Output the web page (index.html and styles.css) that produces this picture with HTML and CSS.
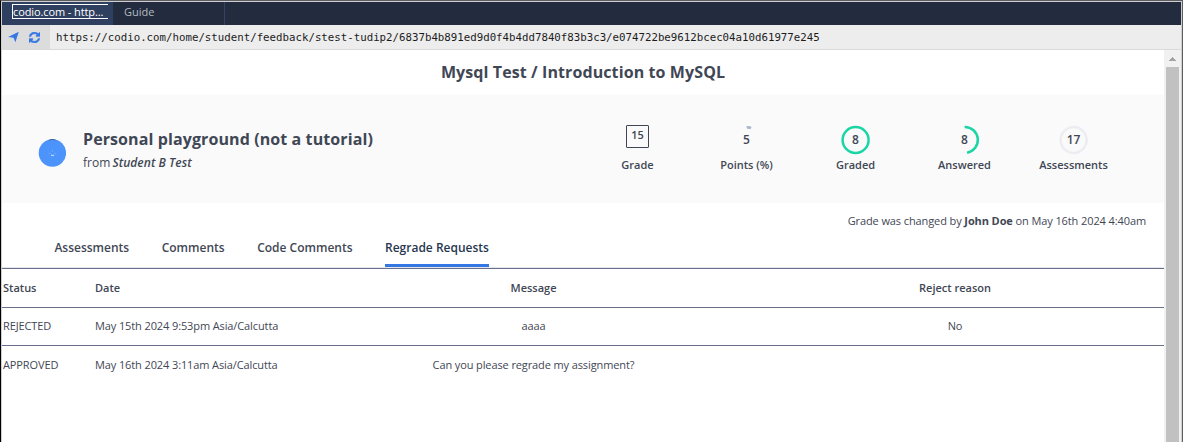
FILE: index.html
```
<!DOCTYPE html>
<html lang="en">
<head>
<meta charset="utf-8">
<title>Mysql Test / Introduction to MySQL</title>
<link rel="stylesheet" href="styles.css">
</head>
<body>
<div class="window">
  <nav class="tabbar">
    <div class="tab tab-active"><span class="tab-label">codio.com - http...</span></div>
    <div class="tab"><span>Guide</span></div>
  </nav>
  <div class="address">
    <div class="address-tools">
      <svg class="icon" width="12" height="12" viewBox="0 0 12 12"><path d="M10.800 .8 7.400 11.200 5.500 6.800.1 5.900Z" fill="#3577e3"/></svg>
      <svg class="icon" width="11" height="11" viewBox="0 0 1536 1536"><path fill="#3577e3" stroke="#3577e3" stroke-width="60" d="M1511 928q0 5-1 7-64 268-268 434.500T764 1536q-146 0-282.500-55T238 1324l-129 129q-19 19-45 19t-45-19-19-45V960q0-26 19-45t45-19h448q26 0 45 19t19 45-19 45l-137 137q71 66 161 102t187 36q134 0 250-65t186-179q11-17 53-117 8-23 30-23h192q13 0 22.500 9.500t9.500 22.500zm25-800v448q0 26-19 45t-45 19h-448q-26 0-45-19t-19-45 19-45l138-138Q969 256 768 256q-134 0-250 65T332 500q-11 17-53 117-8 23-30 23H50q-13 0-22.500-9.500T18 608v-7q65-268 270-434.500T768 0q146 0 284 55.500T1297 212l130-129q19-19 45-19t45 19 19 45z"/></svg>
    </div>
    <div class="url">https://codio.com/home/student/feedback/stest-tudip2/6837b4b891ed9d0f4b4dd7840f83b3c3/e074722be9612bcec04a10d61977e245</div>
  </div>
  <div class="viewport">
    <main class="page">
      <h1 class="title">Mysql Test / Introduction to MySQL</h1>
      <section class="summary">
        <svg class="avatar" width="28" height="28" viewBox="0 0 28 28"><circle cx="14.400" cy="14" r="13.700" fill="#4c94fb"/><path d="M10 1.200Q14.400-.6 18.800 1.200Q14.400 .8 10 1.200" fill="#26496f"/><path d="M10.500 14.500h2M16.500 14.500h2M14.500 11v2" stroke="#79b0fc" stroke-width=".7"/><path d="M13 16.300h3" stroke="#d6e7ff" stroke-width="1"/></svg>
        <div class="project">
          <h2 class="project-name">Personal playground (not a tutorial)</h2>
          <p class="from"><span>from</span> <em class="student">Student B Test</em></p>
        </div>
        <div class="stats">
          <div class="stat"><div class="dial"><span class="grade">15</span></div><span class="stat-label">Grade</span></div>
          <div class="stat"><div class="dial"><svg class="ring" width="30" height="30" viewBox="0 0 30 30"><path d="M14.700 2.600Q17 2 19 3.200" fill="none" stroke="#adb5cd" stroke-width="2.600"/></svg><span class="value">5</span></div><span class="stat-label">Points (%)</span></div>
          <div class="stat"><div class="dial"><svg class="ring" width="30" height="30" viewBox="0 0 30 30"><circle cx="14.600" cy="15" r="13" fill="none" stroke="#1bd6a4" stroke-width="2.500"/></svg><span class="value">8</span></div><span class="stat-label">Graded</span></div>
          <div class="stat"><div class="dial"><svg class="ring" width="30" height="30" viewBox="0 0 30 30"><path d="M14.600 2A13 13 0 0 1 17.100 27.800" fill="none" stroke="#1bd6a4" stroke-width="2.500"/></svg><span class="value">8</span></div><span class="stat-label">Answered</span></div>
          <div class="stat"><div class="dial"><svg class="ring" width="30" height="30" viewBox="0 0 30 30"><circle cx="14.600" cy="15" r="13" fill="none" stroke="#ecedf3" stroke-width="2.500"/></svg><span class="value">17</span></div><span class="stat-label">Assessments</span></div>
        </div>
      </section>
      <p class="changed">Grade was changed by <b class="strong">John Doe</b> on May 16th 2024 4:40am</p>
      <div class="sections">
        <span class="section">Assessments</span>
        <span class="section">Comments</span>
        <span class="section">Code Comments</span>
        <span class="section section-active">Regrade Requests</span>
      </div>
      <div class="requests">
        <div class="row row-head"><span>Status</span><span>Date</span><span class="mid">Message</span><span class="mid">Reject reason</span></div>
        <div class="row"><span>REJECTED</span><span>May 15th 2024 9:53pm Asia/Calcutta</span><span class="mid">aaaa</span><span class="mid">No</span></div>
        <div class="row row-last"><span>APPROVED</span><span>May 16th 2024 3:11am Asia/Calcutta</span><span class="mid">Can you please regrade my assignment?</span><span class="mid"></span></div>
      </div>
    </main>
    <div class="scrollbar">
      <svg class="arrow" width="7" height="4" viewBox="0 0 7 4" shape-rendering="crispEdges"><path d="M3 0h1v1h1v1h1v1h1v1H0V3h1V2h1V1h1Z" fill="#a3a3a3"/></svg>
      <div class="thumb"></div>
    </div>
  </div>
</div>
</body>
</html>
```
FILE: styles.css
```
* { box-sizing: border-box; }
body { margin: 0; font-family: "Open Sans", sans-serif; font-size: 11px; color: #3f4755; background: #fff; }
h1, h2, p { margin: 0; }
.window { width: 1183px; height: 442px; overflow: hidden; display: flex; flex-direction: column; border-left: 1px solid #000; border-right: 1px solid #5e5e60; border-top: 1px solid #5e5e60; box-shadow: inset 1px 1px #cfcfd1, inset -1px 0 #cfcfd1; padding: 1px 1px 0; }
.tabbar { display: flex; flex: none; height: 23px; background: #222c3e; color: #b4b8c0; }
.tab { width: 112px; padding: 1px 0 0 11px; line-height: 17px; border-right: 1px solid #34435f; }
.tab-active { width: 111px; padding: 2px 0 0 10px; background: #2f3f5f; color: #fff; border: 0; }
.tab-label { display: block; width: 96px; height: 15px; line-height: 14px; letter-spacing: -.1px; border: 1px solid #fff; border-right: 0; white-space: nowrap; }
.address { display: flex; flex: none; height: 25px; background: #ededed; border-bottom: 1px solid #d9d9d9; }
.address-tools { display: flex; align-items: center; gap: 9px; width: 48px; padding: 0 0 0 6px; background: #dcdcdc; }
.icon { flex: none; }
.url { padding-left: 6px; line-height: 26px; font-family: "DejaVu Sans Mono", monospace; font-size: 10.75px; color: #1c1c1c; white-space: nowrap; }
.viewport { display: flex; flex: 1; min-height: 0; }
.page { width: 1162px; }
.title { height: 45px; line-height: 44px; text-align: center; font-size: 16px; font-weight: 700; letter-spacing: .1px; }
.summary { display: flex; height: 108px; background: #fafafa; }
.avatar { flex: none; margin: 44px 17px 0 36px; }
.project { width: 500px; padding-top: 32px; }
.project-name { font-size: 16px; font-weight: 700; line-height: 24px; letter-spacing: .1px; }
.from { font-size: 12px; line-height: 24px; }
.student { margin-left: -1px; font-weight: 600; letter-spacing: .05px; }
.stats { display: flex; }
.stat { width: 109px; padding-top: 30px; display: flex; flex-direction: column; align-items: center; }
.dial { display: grid; place-items: center; width: 30px; height: 30px; }
.dial > * { grid-area: 1 / 1; }
.value { font-size: 12px; font-weight: 600; line-height: 16px; }
.grade { width: 23px; height: 23px; margin-bottom: 9px; border: 1px solid #3f4755; border-radius: 1px; text-align: center; line-height: 18px; font-weight: 600; }
.stat-label { margin-top: 2px; font-weight: 600; line-height: 16px; }
.changed { height: 34px; padding: 2px 18px 0 0; line-height: 32px; text-align: right; letter-spacing: -.1px; }
.strong { font-weight: 700; }
.sections { display: flex; gap: 32.5px; height: 31px; padding-left: 52.4px; border-bottom: 1px solid #e6e7ec; font-size: 12px; font-weight: 600; line-height: 21px; }
.section { height: 30px; white-space: nowrap; }
.section-active { color: #27374f; border-bottom: 3px solid #3577e3; }
.requests { border-top: 1px solid #68708c; }
.row { display: grid; grid-template-columns: 92px 230px 417px 426px; height: 38px; padding-left: 1px; line-height: 36px; letter-spacing: -.11px; border-bottom: 1px solid #68708c; }
.row-head { height: 39px; line-height: 38px; font-weight: 600; letter-spacing: 0; }
.row-last { line-height: 37px; border: 0; }
.mid { text-align: center; }
.scrollbar { width: 17px; padding: 7px 2px 0; background: #f1f1f1; display: flex; flex-direction: column; align-items: center; }
.arrow { flex: none; }
.thumb { flex: 1; width: 13px; margin-top: 6px; background: #c1c1c1; }
```
